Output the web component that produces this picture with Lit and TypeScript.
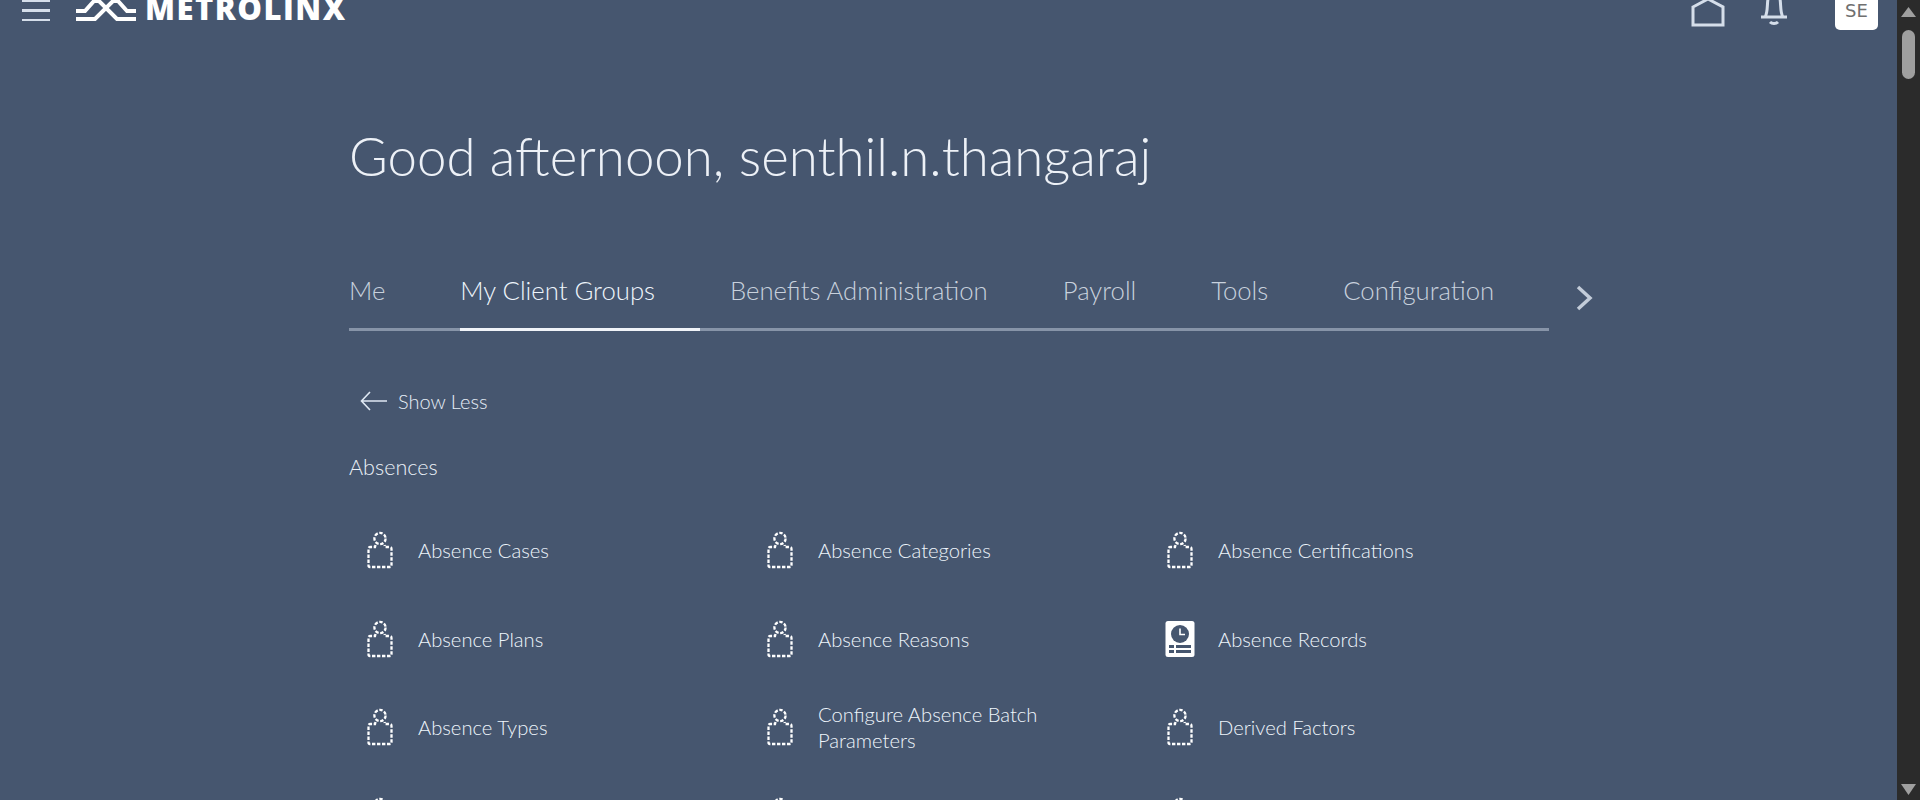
import { LitElement, html, css, svg } from "lit";
import { customElement } from "lit/decorators.js";

const personIcon = html`<svg class="icon" width="36" height="40" viewBox="0 0 36 40" fill="none">
  <g stroke="#fff" stroke-width="2.300" stroke-dasharray="3.400 1.600">
    ${svg`<circle cx="18" cy="8.500" r="5.600"></circle>
    <path d="M13.500 15 L13 17 H8.500 Q6.500 17 6.500 19 V35.500 Q6.500 37 8 37 H28 Q29.500 37 29.500 35.500 V19 Q29.500 17 27.500 17 H23 L22.500 15"></path>`}
  </g>
</svg>`;

const recordsIcon = html`<svg class="icon" width="36" height="40" viewBox="0 0 36 40">
  <rect x="3.500" y="2" width="29" height="36" rx="2.500" fill="#fff"></rect>
  <circle cx="18" cy="15" r="9" fill="#46566f"></circle>
  <path d="M18 9.500 V15.500 H23" stroke="#fff" stroke-width="1.600" fill="none"></path>
  <path d="M7 27.500 H12 M14 27.500 H29 M7 32.500 H12 M14 32.500 H29" stroke="#46566f" stroke-width="3"></path>
</svg>`;

const tabs = ["Me", "My Client Groups", "Benefits Administration", "Payroll", "Tools", "Configuration"];

const items: { label: string; records?: boolean }[] = [
  { label: "Absence Cases" },
  { label: "Absence Categories" },
  { label: "Absence Certifications" },
  { label: "Absence Plans" },
  { label: "Absence Reasons" },
  { label: "Absence Records", records: true },
  { label: "Absence Types" },
  { label: "Configure Absence Batch Parameters" },
  { label: "Derived Factors" },
  { label: "" },
  { label: "" },
  { label: "" },
];

@customElement("app-root")
export class AppRoot extends LitElement {
  static styles = css`
    * {
      box-sizing: border-box;
    }

    :host {
      display: flex;
      height: 800px;
      overflow: hidden;
      background: #46566f;
      font-family: "Lato", "Liberation Sans", sans-serif;
      font-weight: 300;
      color: #fff;
    }

    #page {
      flex: 1;
      min-width: 0;
      height: 800px;
      overflow: hidden;
    }

    header {
      display: flex;
      align-items: flex-end;
      height: 46px;
      margin-top: -16px;
      padding: 0 19px 0 22px;
    }

    .burger {
      display: flex;
      flex-direction: column;
      gap: 7px;
      width: 28px;
      margin: 0 26px 9px 0;
    }

    .burger span {
      height: 2.500px;
      background: #d5deea;
    }

    .logo {
      display: flex;
      align-items: flex-end;
      gap: 9px;
      height: 40px;
      margin-bottom: 2px;
      font-family: "Open Sans", sans-serif;
      font-weight: 800;
      font-size: 31px;
      line-height: 40px;
      letter-spacing: 1.500px;
      color: #fff;
    }

    .logo svg {
      margin-bottom: 2px;
      overflow: visible;
    }

    .actions {
      display: flex;
      align-items: flex-end;
      margin-left: auto;
    }

    .home {
      margin-bottom: 3px;
    }

    .bell {
      margin: 0 0 3px 34px;
    }

    .avatar {
      display: flex;
      align-items: center;
      justify-content: center;
      width: 43px;
      height: 46px;
      margin-left: 46px;
      padding-top: 6px;
      border-radius: 0 0 5px 5px;
      background: #fff;
      font-family: "DejaVu Sans", sans-serif;
      font-weight: 400;
      font-size: 18px;
      color: #6f6f6f;
    }

    main {
      padding: 88px 0 0 349px;
    }

    h1 {
      margin: 0;
      font-weight: 300;
      font-size: 52.800px;
      line-height: 76px;
      color: #edf1f7;
    }

    nav {
      display: flex;
      align-items: center;
    }

    .tabs {
      display: flex;
      width: 1200px;
      height: 72px;
      margin-top: 65px;
      border-bottom: 3px solid #8794a8;
    }

    .tab {
      height: 72px;
      padding: 16px 0 0;
      margin-right: 75px;
      font-size: 25.700px;
      color: #c8d1dd;
      white-space: nowrap;
    }

    .tab.active {
      margin-right: 30px;
      padding-right: 45px;
      border-bottom: 3px solid #f0f3f8;
      color: #eef5fc;
    }

    .next {
      margin: 70px 0 0 26px;
    }

    .back {
      display: flex;
      align-items: center;
      gap: 11px;
      margin: 55px 0 0 11px;
      font-size: 20px;
      line-height: 30px;
      color: #e6eef7;
    }

    h2 {
      margin: 36px 0 0;
      font-weight: 300;
      font-size: 21.600px;
      line-height: 30px;
      color: #eaf0f7;
    }

    .grid {
      display: grid;
      grid-template-columns: repeat(3, 400px);
      grid-auto-rows: 88.500px;
      margin-top: 24px;
    }

    .item {
      display: flex;
      align-items: center;
      gap: 20px;
      padding: 0 40px 0 13px;
      font-size: 20.200px;
      line-height: 26px;
      color: #eef5fc;
    }

    .icon {
      flex: none;
    }

    #scrollbar {
      display: flex;
      flex-direction: column;
      align-items: center;
      flex: none;
      width: 23px;
      height: 800px;
      padding-top: 7px;
      background: #2b2b2b;
    }

    .thumb {
      width: 13px;
      height: 49px;
      margin-top: 12px;
      border-radius: 7px;
      background: #9f9f9f;
    }

    .arrow-down {
      margin-top: auto;
      margin-bottom: 5px;
    }
  `;

  render() {
    return html`
      <div id="page">
        <header>
          <div class="burger"><span></span><span></span><span></span></div>
          <div class="logo">
            <svg width="60" height="24" viewBox="0 0 60 24" fill="none" stroke="#fff" stroke-width="4">
              <path d="M0 9 H9 L18 -1 H23 L41 17 H60"></path>
              <path d="M60 9 H51 L42 -1 H37 L19 17 H0"></path>
            </svg>
            <span>METROLINX</span>
          </div>
          <div class="actions">
            <svg class="home" width="34" height="34" viewBox="0 0 34 34" fill="none" stroke="#d5deea" stroke-width="3">
              <path d="M2 14 L17 6 L32 14 V32 H2 Z"></path>
            </svg>
            <svg class="bell" width="30" height="34" viewBox="0 0 30 34" fill="none" stroke="#d5deea" stroke-width="3">
              <path d="M2 24 H28 M6 24 C9 20 8 10 9 6 C10 2 20 2 21 6 C22 10 21 20 24 24"></path>
              <path d="M11 29 C13 31 17 31 19 29"></path>
            </svg>
            <div class="avatar">SE</div>
          </div>
        </header>
        <main>
          <h1>Good afternoon, senthil.n.thangaraj</h1>
          <nav>
            <div class="tabs">
              ${tabs.map((t, i) => html`<div class="tab ${i === 1 ? "active" : ""}">${t}</div>`)}
            </div>
            <svg class="next" width="20" height="26" viewBox="0 0 20 26" fill="none" stroke="#c3ccd9" stroke-width="3.500">
              <path d="M3 2 L15 13 L3 24"></path>
            </svg>
          </nav>
          <div class="back">
            <svg width="27" height="20" viewBox="0 0 27 20" fill="none" stroke="#dfe8f3" stroke-width="1.600">
              <path d="M10 1 L1.500 10 L10 19 M1.500 10 H27"></path>
            </svg>
            Show Less
          </div>
          <h2>Absences</h2>
          <div class="grid">
            ${items.map(
              (it) => html`<div class="item">${it.records ? recordsIcon : personIcon}<span>${it.label}</span></div>`
            )}
          </div>
        </main>
      </div>
      <div id="scrollbar">
        <svg width="15" height="11" viewBox="0 0 15 11"><path d="M7.500 0 L15 10 H0 Z" fill="#9f9f9f"></path></svg>
        <div class="thumb"></div>
        <svg class="arrow-down" width="15" height="11" viewBox="0 0 15 11"><path d="M0 0 H15 L7.500 11 Z" fill="#9f9f9f"></path></svg>
      </div>
    `;
  }
}
